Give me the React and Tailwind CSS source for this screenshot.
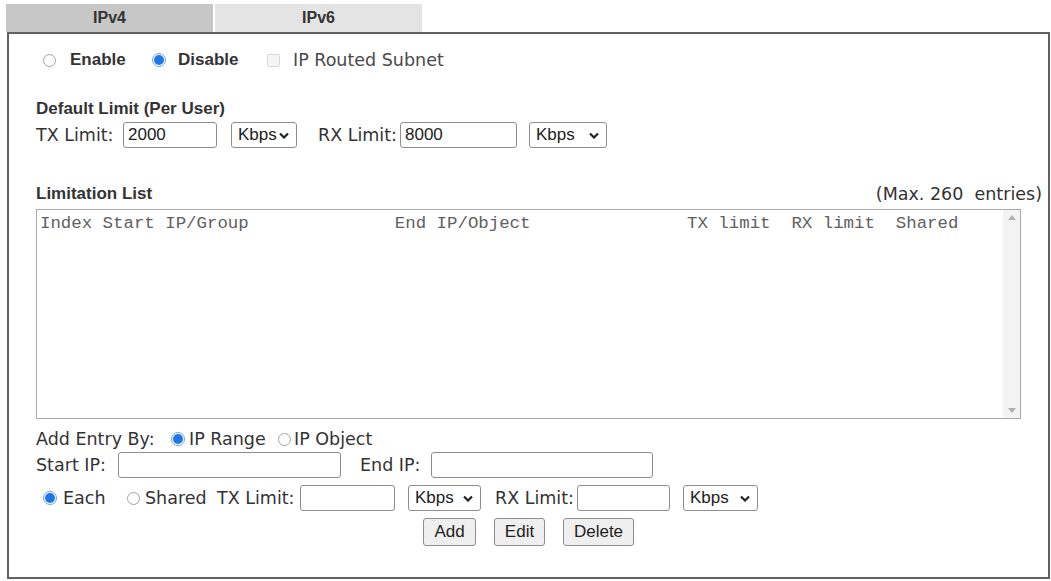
const verdana = "font-['DejaVu_Sans',Verdana,sans-serif]"
const arial = "font-['Liberation_Sans',Arial,sans-serif]"

function Radio({ on, className = '' }) {
  if (on) {
    return (
      <span
        className={`flex h-[14px] w-[14px] shrink-0 items-center justify-center rounded-full border border-[#6aa5ec] bg-white ${className}`}
      >
        <span className="h-[10px] w-[10px] rounded-full bg-[#1f76e4]" />
      </span>
    )
  }
  return (
    <span
      className={`h-[13px] w-[13px] shrink-0 rounded-full border border-[#a3a3a3] bg-white ${className}`}
    />
  )
}

function Field({ value = '', className = '' }) {
  return (
    <span
      className={`flex h-[26px] shrink-0 items-center rounded-[3px] border border-[#8e8e8e] bg-white pl-[4px] text-[17px] text-[#222] ${arial} ${className}`}
    >
      {value}
    </span>
  )
}

function Unit({ className = '' }) {
  return (
    <span
      className={`flex h-[26px] shrink-0 items-center justify-between rounded-[3px] border border-[#8e8e8e] bg-white pl-[6px] pr-[7px] text-[17px] text-[#222] ${arial} ${className}`}
    >
      Kbps
      <svg width="10" height="7" viewBox="0 0 10 7">
        <polyline
          points="1,1.5 5,5.5 9,1.5"
          fill="none"
          stroke="#222"
          strokeWidth="2.2"
        />
      </svg>
    </span>
  )
}

function Button({ children, className = '' }) {
  return (
    <span
      className={`flex h-[28px] shrink-0 items-center justify-center rounded-[3px] border border-[#8e8e8e] bg-[#efefef] text-[17px] text-[#222] ${arial} ${className}`}
    >
      {children}
    </span>
  )
}

export default function App() {
  return (
    <div className={`h-[581px] w-[1051px] overflow-hidden bg-white text-[#333] ${verdana}`}>
      {/* Tabs */}
      <div className="flex gap-[2px] pl-[6px] pt-[4px]">
        <div
          className={`flex h-[28px] w-[207px] items-center justify-center bg-[#c7c7c7] text-[16px] font-bold text-[#333] ${arial}`}
        >
          IPv4
        </div>
        <div
          className={`flex h-[28px] w-[207px] items-center justify-center bg-[#e4e4e4] text-[16px] font-bold text-[#333] ${arial}`}
        >
          IPv6
        </div>
      </div>

      {/* Panel */}
      <div className="ml-[7px] h-[547px] w-[1043px] border-2 border-[#616161]">
        {/* Enable / Disable */}
        <div className="mt-[13px] flex h-[26px] items-center">
          <Radio className="ml-[34px]" />
          <span className={`ml-[14px] w-[82px] text-[17px] font-bold ${arial}`}>Enable</span>
          <Radio on />
          <span className={`ml-[12px] w-[89px] text-[17px] font-bold ${arial}`}>Disable</span>
          <span className="h-[13px] w-[13px] shrink-0 rounded-[2px] border border-[#d9d9d9] bg-[#f5f5f5]" />
          <span className="ml-[13px] text-[17.5px] text-[#4a4a4a]">IP Routed Subnet</span>
        </div>

        <div className="pl-[27px]">
          {/* Default limit */}
          <div className={`mt-[25px] h-[22px] text-[17px] font-bold leading-[22px] ${arial}`}>
            Default Limit (Per User)
          </div>
          <div className="mt-[2px] flex h-[26px] items-center text-[17.5px]">
            <span className="w-[87px] shrink-0">TX Limit:</span>
            <Field value="2000" className="w-[94px]" />
            <Unit className="ml-[14px] w-[66px]" />
            <span className="ml-[21px] w-[82px] shrink-0">RX Limit:</span>
            <Field value="8000" className="w-[117px]" />
            <Unit className="ml-[12px] w-[78px]" />
          </div>

          {/* Limitation list */}
          <div className="mt-[35px] flex h-[22px] items-center justify-between pr-[6px]">
            <span className={`text-[17px] font-bold ${arial}`}>Limitation List</span>
            <span className="whitespace-pre text-[17.5px]">(Max. 260  entries)</span>
          </div>
          <div className="mt-[4px] flex h-[210px] w-[985px] border border-[#a9a9a9]">
            <div className="flex-1 whitespace-pre pl-[3px] pt-[4px] font-['Liberation_Mono',monospace] text-[17.4px] leading-[20px] text-[#606060]">
              {'Index Start IP/Group              End IP/Object               TX limit  RX limit  Shared'}
            </div>
            <div className="flex w-[17px] flex-col items-center justify-between bg-[#f3f3f3] py-[5px]">
              <svg width="8" height="5" viewBox="0 0 8 5">
                <polygon points="0,5 4,0 8,5" fill="#b0b0b0" />
              </svg>
              <svg width="8" height="5" viewBox="0 0 8 5">
                <polygon points="0,0 8,0 4,5" fill="#b0b0b0" />
              </svg>
            </div>
          </div>

          {/* Add entry */}
          <div className="mt-[9px] flex h-[22px] items-center text-[17.5px]">
            <span className="w-[135px] shrink-0">Add Entry By:</span>
            <Radio on />
            <span className="ml-[4px] w-[89px] shrink-0">IP Range</span>
            <Radio />
            <span className="ml-[3px]">IP Object</span>
          </div>
          <div className="mt-[2px] flex h-[26px] items-center text-[17.5px]">
            <span className="w-[82px] shrink-0">Start IP:</span>
            <Field className="w-[223px]" />
            <span className="ml-[19px] w-[71px] shrink-0">End IP:</span>
            <Field className="w-[222px]" />
          </div>
          <div className="mt-[7px] flex h-[26px] items-center text-[17.5px]">
            <Radio on className="ml-[7px]" />
            <span className="ml-[6px] w-[64px] shrink-0">Each</span>
            <Radio />
            <span className="ml-[5px] w-[72px] shrink-0">Shared</span>
            <span className="w-[83px] shrink-0">TX Limit:</span>
            <Field className="w-[95px]" />
            <Unit className="ml-[13px] w-[73px]" />
            <span className="ml-[14px] w-[82px] shrink-0">RX Limit:</span>
            <Field className="w-[93px]" />
            <Unit className="ml-[13px] w-[75px]" />
          </div>

          {/* Actions */}
          <div className="mt-[7px] flex">
            <Button className="ml-[387px] w-[53px]">Add</Button>
            <Button className="ml-[18px] w-[51px]">Edit</Button>
            <Button className="ml-[18px] w-[71px]">Delete</Button>
          </div>
        </div>
      </div>
    </div>
  )
}
